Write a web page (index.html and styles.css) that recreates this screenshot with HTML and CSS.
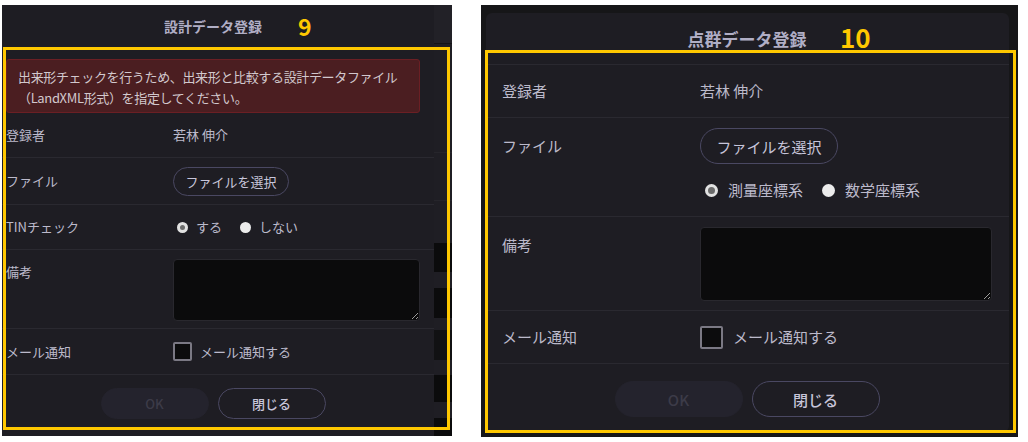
FILE: index.html
```html
<!DOCTYPE html>
<html lang="ja">
<head>
    <meta charset="UTF-8">
    <title>データ登録ダイアログ</title>
    <link rel="stylesheet" href="styles.css">
</head>
<body>
    <!-- 設計データ登録 -->
    <div class="shot shot-a">
        <div class="modal">
            <div class="head">
                <span class="title">設計データ登録</span>
                <span class="tag">9</span>
            </div>
            <div class="alert">出来形チェックを行うため、出来形と比較する設計データファイル<br>（LandXML形式）を指定してください。</div>
            <div class="row row-user">
                <div class="label">登録者</div>
                <div class="value">若林 伸介</div>
            </div>
            <div class="row row-file">
                <div class="label">ファイル</div>
                <div class="value"><button class="pick">ファイルを選択</button></div>
            </div>
            <div class="row row-tin">
                <div class="label">TINチェック</div>
                <div class="value radios">
                    <span class="radio on"></span><span class="opt">する</span>
                    <span class="radio"></span><span class="opt">しない</span>
                </div>
            </div>
            <div class="row row-note">
                <div class="label">備考</div>
                <div class="value"><textarea class="memo"></textarea></div>
            </div>
            <div class="row row-mail">
                <div class="label">メール通知</div>
                <div class="value check"><span class="box"></span>メール通知する</div>
            </div>
            <div class="foot">
                <button class="btn ok" disabled>OK</button>
                <button class="btn">閉じる</button>
            </div>
        </div>
        <div class="under">
            <div class="s s-top"></div>
            <div class="s s-mid"></div>
            <div class="s s-dark" style="height: 29px"></div>
            <div class="s" style="height: 16px"></div>
            <div class="s s-dark" style="height: 30px"></div>
            <div class="s" style="height: 12px"></div>
            <div class="s s-dim" style="height: 30px"></div>
            <div class="s" style="height: 15px"></div>
            <div class="s s-dark" style="height: 27px"></div>
            <div class="s" style="height: 16px"></div>
            <div class="s s-dark" style="height: 18px"></div>
        </div>
        <div class="mark"></div>
    </div>

    <!-- 点群データ登録 -->
    <div class="shot shot-b">
        <div class="modal">
            <div class="head">
                <span class="title">点群データ登録</span>
                <span class="tag">10</span>
            </div>
            <div class="row row-user">
                <div class="label">登録者</div>
                <div class="value">若林 伸介</div>
            </div>
            <div class="row row-file">
                <div class="label">ファイル</div>
                <div class="value">
                    <button class="pick">ファイルを選択</button>
                    <div class="radios">
                        <span class="radio on"></span><span class="opt">測量座標系</span>
                        <span class="radio"></span><span class="opt">数学座標系</span>
                    </div>
                </div>
            </div>
            <div class="row row-note">
                <div class="label">備考</div>
                <div class="value"><textarea class="memo"></textarea></div>
            </div>
            <div class="row row-mail">
                <div class="label">メール通知</div>
                <div class="value check"><span class="box"></span>メール通知する</div>
            </div>
            <div class="foot">
                <button class="btn ok" disabled>OK</button>
                <button class="btn">閉じる</button>
            </div>
        </div>
        <div class="mark"></div>
    </div>
</body>
</html>
```

FILE: styles.css
```css
* {
    box-sizing: border-box;
}

body, html {
    margin: 0;
    padding: 0;
    background-color: #fff;
}

body {
    display: flex;
    align-items: flex-start;
    font-family: "Noto Sans CJK JP", "Noto Sans", sans-serif;
    color: #bcbacb;
    color-scheme: dark;
}

.shot {
    position: relative;
    display: flex;
    margin-top: 5px;
}

.modal {
    display: flex;
    flex-direction: column;
    background-color: #1e1d23;
}

.head {
    position: relative;
    display: flex;
    justify-content: center;
    align-items: center;
}

.title {
    font-weight: bold;
    color: #b0aec5;
}

.tag {
    position: absolute;
    font-weight: bold;
    color: #ffc800;
}

.row {
    display: grid;
    align-items: center;
    border-bottom: 1px solid #2a2930;
}

.value {
    display: flex;
    align-items: center;
}

.pick, .btn {
    font-family: inherit;
    background: transparent;
    color: #c7c5da;
    border: 1px solid #4a4862;
    border-radius: 999px;
    padding: 0;
}

.radios {
    display: flex;
    align-items: center;
}

.radio {
    display: inline-block;
    border-radius: 50%;
    background-color: #ececec;
    margin-right: 8px;
}

.radio.on {
    background-color: #6b6b6b;
    border: 3px solid #e2e2e2;
}

.opt {
    margin-right: 18px;
}

.memo {
    display: block;
    width: 100%;
    background-color: #0b0b0c;
    border: 1px solid #29282e;
    border-radius: 4px;
    color: #ccc;
    resize: both;
}

.check .box {
    display: inline-block;
    border: 2px solid #7b7984;
    border-radius: 2px;
    background-color: #0c0c0d;
    margin-right: 8px;
}

.foot {
    display: flex;
    justify-content: center;
    gap: 9px;
}

.btn {
    font-weight: 500;
}

.btn.ok {
    background-color: #24232d;
    border-color: #24232d;
    color: #3c3b48;
}

.mark {
    position: absolute;
    border: 3px solid #ffc800;
    pointer-events: none;
}

/* 左：設計データ登録 */
.shot-a {
    margin-left: 2px;
    height: 431px;
}

.shot-a .modal {
    width: 432px;
    font-size: 13px;
    line-height: 18px;
}

.shot-a .head {
    height: 42px;
    padding-left: 4px;
    padding-right: 14px;
}

.shot-a .title {
    font-size: 14px;
}

.shot-a .tag {
    left: 296px;
    top: 8px;
    font-size: 23px;
    line-height: 26px;
}

.shot-a .alert {
    margin: 12px 14px 0 4px;
    height: 54px;
    padding: 6px 0 0 11px;
    background-color: #4b1e21;
    border: 1px solid #6b1f24;
    border-radius: 3px;
    color: #d2c8cd;
    line-height: 21px;
    letter-spacing: -0.35px;
    white-space: nowrap;
}

.shot-a .row {
    grid-template-columns: 167px 1fr;
    padding: 0 14px 0 4px;
}

.shot-a .row-user { height: 45px; }
.shot-a .row-file { height: 47px; }
.shot-a .row-tin { height: 45px; }
.shot-a .row-mail { height: 46px; }

.shot-a .row-note {
    height: 79px;
    align-items: start;
    padding-top: 9px;
}

.shot-a .row-note .label {
    margin-top: 4px;
}

.shot-a .pick {
    width: 116px;
    height: 29px;
    font-size: 13px;
}

.shot-a .radios {
    padding-left: 4px;
}

.shot-a .radio {
    width: 11px;
    height: 11px;
}

.shot-a .memo {
    height: 62px;
}

.shot-a .box {
    width: 19px;
    height: 19px;
}

.shot-a .foot {
    padding: 13px 14px 0 4px;
    height: 54px;
}

.shot-a .btn {
    width: 108px;
    height: 31px;
    font-size: 13px;
}

.under {
    display: flex;
    flex-direction: column;
    width: 18px;
    background-color: #1f1e24;
}

.under .s {
    background-color: #1f1e24;
}

.under .s-top {
    height: 39px;
    background-color: #222127;
    border-bottom: 1px solid #141416;
}

.under .s-mid {
    height: 199px;
    background-image: linear-gradient(#1f1e24 108px, #26252b 108px, #26252b 109px, #1f1e24 109px, #1f1e24 156px, #26252b 156px, #26252b 157px, #1f1e24 157px);
}

.under .s-dark {
    background-color: #0b0b0c;
}

.under .s-dim {
    background-color: #111113;
}

.shot-a .mark {
    left: 1px;
    top: 42px;
    width: 447px;
    height: 383px;
}

/* 右：点群データ登録 */
.shot-b {
    margin-left: 29px;
    width: 537px;
    height: 432px;
    padding: 8px 9px 5px 5px;
    background-color: #161618;
}

.shot-b .modal {
    flex: 1;
    border-radius: 6px;
    font-size: 15px;
    line-height: 20px;
}

.shot-b .head {
    height: 52px;
    padding-left: 16px;
    padding-right: 17px;
    border-bottom: 1px solid #2a2930;
}

.shot-b .title {
    font-size: 17px;
}

.shot-b .tag {
    left: 354px;
    top: 9px;
    font-size: 26px;
    line-height: 30px;
}

.shot-b .row {
    grid-template-columns: 198px 1fr;
    padding: 0 17px 0 16px;
}

.shot-b .row-user { height: 53px; }
.shot-b .row-mail { height: 53px; }

.shot-b .row-file {
    height: 99px;
    align-items: start;
    padding-top: 10px;
}

.shot-b .row-file .label {
    line-height: 36px;
}

.shot-b .row-file .value {
    flex-direction: column;
    align-items: flex-start;
}

.shot-b .row-file .radios {
    margin-top: 15px;
    line-height: 22px;
    padding-left: 5px;
}

.shot-b .row-note {
    height: 94px;
    align-items: start;
    padding-top: 10px;
}

.shot-b .row-note .label {
    margin-top: 8px;
}

.shot-b .pick {
    width: 138px;
    height: 36px;
    font-size: 15px;
}

.shot-b .radio {
    width: 13px;
    height: 13px;
    margin-right: 10px;
}

.shot-b .opt {
    margin-right: 19px;
}

.shot-b .memo {
    height: 74px;
}

.shot-b .box {
    width: 23px;
    height: 23px;
    margin-right: 10px;
}

.shot-b .foot {
    padding: 17px 17px 0 16px;
}

.shot-b .btn {
    width: 128px;
    height: 36px;
    font-size: 15px;
}

.shot-b .mark {
    left: 4px;
    top: 45px;
    width: 531px;
    height: 383px;
}
```
